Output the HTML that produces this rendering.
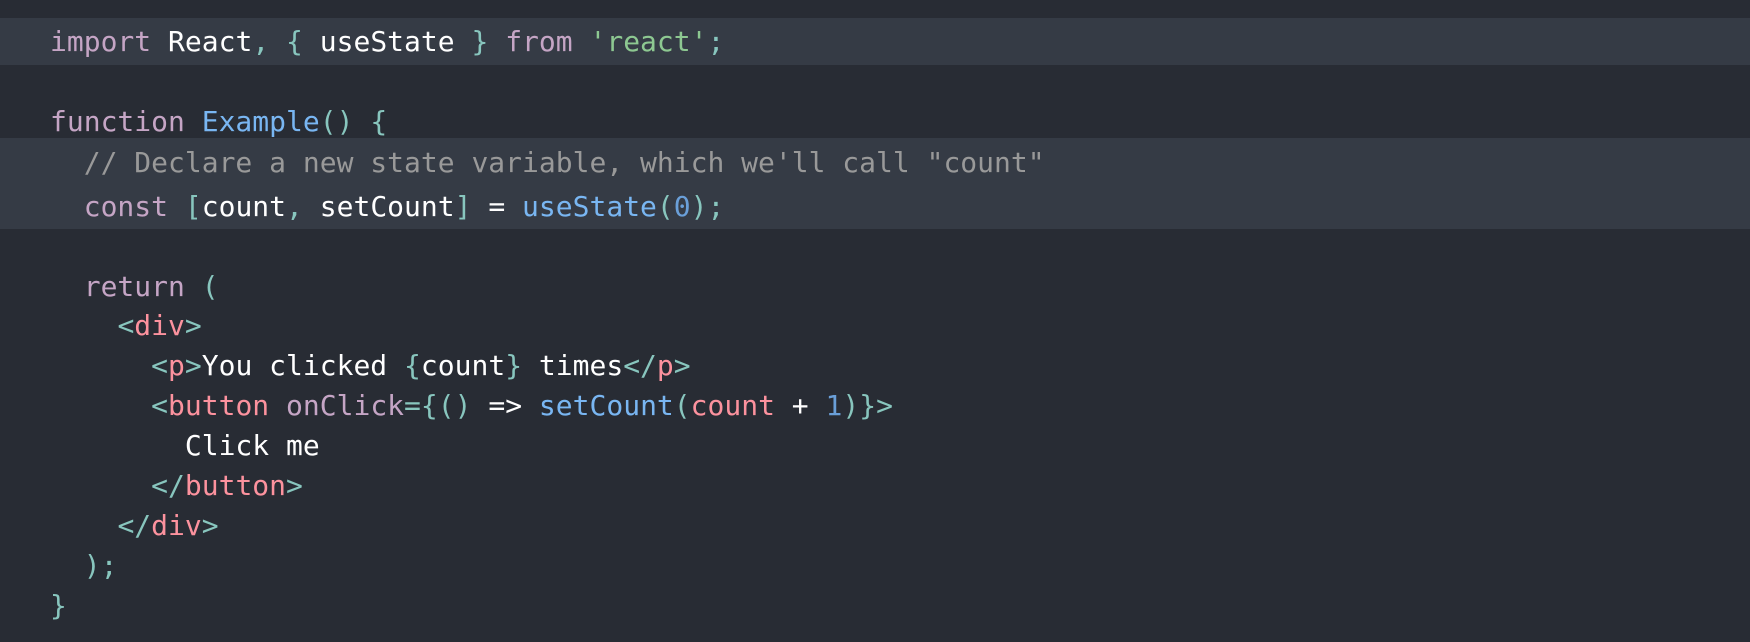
<!DOCTYPE html>
<html><head><meta charset="utf-8"><style>
html,body{margin:0;padding:0;width:1750px;height:642px;background:#282c34;overflow:hidden}
.hl{position:absolute;left:0;width:1750px;background:#353b45}
.l{position:absolute;left:50px;height:40px;line-height:40px;white-space:pre;font-family:"DejaVu Sans Mono","Liberation Mono",monospace;font-size:28px;color:#fff}
.k{color:#c5a5c5}.s{color:#8dc891}.p{color:#88c6be}.f{color:#79b6f2}.t{color:#fc929e}.c{color:#999}.n{color:#6a9fd8}
</style></head><body>
<div class="hl" style="top:18px;height:47px"></div>
<div class="hl" style="top:138px;height:91px"></div>
<div class="l" style="top:22px"><span class="k">import</span> React<span class="p">,</span> <span class="p">{</span> useState <span class="p">}</span> <span class="k">from</span> <span class="s">'react'</span><span class="p">;</span></div>
<div class="l" style="top:102px"><span class="k">function</span> <span class="f">Example</span><span class="p">()</span> <span class="p">{</span></div>
<div class="l" style="top:143px">  <span class="c">// Declare a new state variable, which we'll call "count"</span></div>
<div class="l" style="top:187px">  <span class="k">const</span> <span class="p">[</span>count<span class="p">,</span> setCount<span class="p">]</span> = <span class="f">useState</span><span class="p">(</span><span class="n">0</span><span class="p">);</span></div>
<div class="l" style="top:267px">  <span class="k">return</span> <span class="p">(</span></div>
<div class="l" style="top:306px">    <span class="p">&lt;</span><span class="t">div</span><span class="p">&gt;</span></div>
<div class="l" style="top:346px">      <span class="p">&lt;</span><span class="t">p</span><span class="p">&gt;</span>You clicked <span class="p">{</span>count<span class="p">}</span> times<span class="p">&lt;/</span><span class="t">p</span><span class="p">&gt;</span></div>
<div class="l" style="top:386px">      <span class="p">&lt;</span><span class="t">button</span> <span class="k">onClick</span><span class="p">={()</span> =&gt; <span class="f">setCount</span><span class="p">(</span><span class="t">count</span> + <span class="n">1</span><span class="p">)}&gt;</span></div>
<div class="l" style="top:426px">        Click me</div>
<div class="l" style="top:466px">      <span class="p">&lt;/</span><span class="t">button</span><span class="p">&gt;</span></div>
<div class="l" style="top:506px">    <span class="p">&lt;/</span><span class="t">div</span><span class="p">&gt;</span></div>
<div class="l" style="top:546px">  <span class="p">);</span></div>
<div class="l" style="top:586px"><span class="p">}</span></div>
</body></html>
